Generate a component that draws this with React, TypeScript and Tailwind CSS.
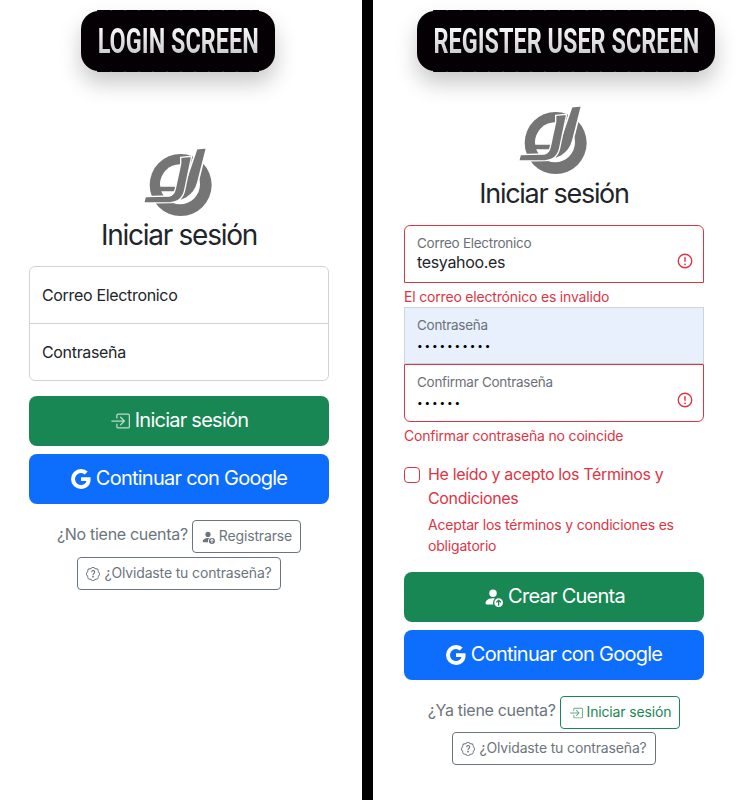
import React from "react";
import { BsBoxArrowInRight, BsPersonFillUp, BsPatchQuestion, BsGoogle } from "react-icons/bs";

const Logo = () => (
  <svg width="80" height="75" viewBox="0 0 240 225" className="block">
    <circle cx="122" cy="117" r="93" fill="#757575" />
    <circle cx="120" cy="115" r="60" fill="#fff" />
    <path d="M60 122 H112 L108 136 H58 Z" fill="#757575" />
    <path d="M170 8 L200 5 L174 108 Q166 140 140 156 L118 166 L132 120 Z" fill="#757575" stroke="#fff" strokeWidth="5" />
    <path d="M122 34 L155 31 L135 128 Q128 168 92 170 L11 171 L16 152 L88 150 Q102 148 106 128 L122 54 Z" fill="#757575" stroke="#fff" strokeWidth="4" />
  </svg>
);

const Badge = ({ text, w, ml }: { text: string; w: string; ml: string }) => (
  <div className={`relative flex h-[60px] items-center justify-center rounded-[18px] bg-[#040004] shadow-[0_12px_22px_rgba(0,0,0,0.22)] ${w} ${ml}`}>
    <div className="absolute -top-[1px] right-4 left-4 h-[2px] bg-[radial-gradient(ellipse_at_center,#040004_70%,transparent_100%)] bg-[length:14px_2px]" />
    <div className="absolute right-4 -bottom-[1px] left-4 h-[2px] bg-[radial-gradient(ellipse_at_center,#040004_70%,transparent_100%)] bg-[length:14px_2px]" />
    <span className="relative inline-block scale-x-[0.67] bg-gradient-to-b from-white to-[#c4c4c4] bg-clip-text font-['Roboto',sans-serif] text-[35px] leading-none font-bold whitespace-nowrap text-transparent">
      {text}
    </span>
  </div>
);

const ErrorIcon = () => (
  <svg width="18" height="18" viewBox="0 0 12 12" fill="none" stroke="#dc3545" className="mt-[19px] shrink-0">
    <circle cx="6" cy="6" r="4.500" strokeWidth="0.9" />
    <path strokeLinejoin="round" strokeWidth="0.6" d="M5.800 3.600h.4L6 6.500z" />
    <circle cx="6" cy="8.200" r=".6" fill="#dc3545" stroke="none" />
  </svg>
);

const BigButton = ({ color, icon, label }: { color: string; icon: React.ReactNode; label: string }) => (
  <div className={`flex h-[50px] w-[300px] items-center justify-center gap-[5px] rounded-lg text-[20px] tracking-[-0.75px] text-white ${color}`}>
    {icon}
    <span className="pb-[2px]">{label}</span>
  </div>
);

const SmallButton = ({ icon, label, tone }: { icon: React.ReactNode; label: string; tone: string }) => (
  <div className={`inline-flex h-[33px] items-center gap-1 rounded border px-2 text-sm tracking-[-0.15px] ${tone}`}>
    {icon}
    <span className="pb-[1px]">{label}</span>
  </div>
);

const Field = ({ label, value, tone, error, dots }: { label: string; value: string; tone: string; error?: boolean; dots?: boolean }) => (
  <div className={`flex items-start justify-between border pt-[7px] pr-[9px] pl-3 ${tone}`}>
    <div className="flex flex-col">
      <span className="text-[13.500px] leading-5 tracking-[-0.28px] text-[#6b7177]">{label}</span>
      <span className={dots ? "text-[10px] leading-5 tracking-[1.9px] text-black" : "text-[16px] leading-[19px] tracking-[-0.33px] text-[#212529]"}>{value}</span>
    </div>
    {error && <ErrorIcon />}
  </div>
);

const Footer = ({ text, btn, gap, pad }: { text: string; btn: React.ReactNode; gap: string; pad: string }) => (
  <div className={`flex w-[300px] flex-col items-center ${gap}`}>
    <div className="flex items-start gap-1">
      <span className={`text-[16px] leading-6 tracking-[-0.3px] text-[#6c757d] ${pad}`}>{text}</span>
      {btn}
    </div>
    <SmallButton tone="border-[#6c757d] text-[#6c757d]" icon={<BsPatchQuestion size={14} />} label="¿Olvidaste tu contraseña?" />
  </div>
);

export default function App() {
  return (
    <div className="flex h-[800px] w-[740px] overflow-hidden bg-white font-['Inter',sans-serif]">
      <div className="flex w-[362px] flex-col pt-[11px]">
        <Badge text="LOGIN SCREEN" w="w-[194px]" ml="ml-[81px]" />
        <div className="ml-[29px] flex w-[300px] flex-col">
          <div className="mt-[75px] flex justify-center pl-[2px]"><Logo /></div>
          <h3 className="mt-[-3px] text-center text-[28px] leading-[34px] tracking-[-1.28px] text-[#212529]">Iniciar sesión</h3>
          <div className="mt-[14px] overflow-hidden rounded-md border border-[#ced4da] tracking-[-0.33px]">
            <div className="flex h-[56px] items-center px-3 text-[16px] text-[#212529]">Correo Electronico</div>
            <div className="flex h-[57px] items-center border-t border-[#ced4da] px-3 text-[16px] text-[#212529]">Contraseña</div>
          </div>
          <div className="mt-[15px] flex flex-col gap-2">
            <BigButton color="bg-[#198754]" icon={<BsBoxArrowInRight size={20} className="opacity-70" />} label="Iniciar sesión" />
            <BigButton color="bg-[#0d6efd]" icon={<BsGoogle size={20} />} label="Continuar con Google" />
          </div>
          <div className="mt-4">
            <Footer gap="gap-1" pad="pt-[2px]" text="¿No tiene cuenta?" btn={<SmallButton tone="border-[#6c757d] text-[#6c757d]" icon={<BsPersonFillUp size={14} />} label="Registrarse" />} />
          </div>
        </div>
      </div>
      <div className="w-[11px] bg-black" />
      <div className="flex flex-1 flex-col pt-[11px]">
        <Badge text="REGISTER USER SCREEN" w="w-[298px]" ml="ml-[44px]" />
        <div className="ml-[31px] flex w-[300px] flex-col">
          <div className="mt-[33px] flex justify-center pl-[2px]"><Logo /></div>
          <h3 className="mt-[-2px] text-center text-[27px] leading-[34px] tracking-[-1.3px] text-[#212529]">Iniciar sesión</h3>
          <div className="mt-[14px]">
            <Field label="Correo Electronico" value="tesyahoo.es" tone="h-[58px] rounded-t-md border-[#dc3545] bg-white" error />
            <div className="mt-[3px] text-[14px] leading-[21px] tracking-[-0.18px] text-[#dc3545]">El correo electrónico es invalido</div>
            <Field label="Contraseña" value="••••••••••" dots tone="h-[57px] border-[#ced4da] bg-[#e8f0fe]" />
            <Field label="Confirmar Contraseña" value="••••••" dots tone="h-[58px] rounded-b-md border-[#dc3545] bg-white" error />
            <div className="mt-[3px] text-[14px] leading-[21px] tracking-[-0.18px] text-[#dc3545]">Confirmar contraseña no coincide</div>
          </div>
          <div className="mt-4 flex items-start gap-2">
            <div className="mt-[5px] h-4 w-4 shrink-0 rounded border border-[#dc3545] bg-white" />
            <div className="flex flex-col text-[#dc3545]">
              <span className="text-[16px] leading-6 tracking-[-0.35px]">He leído y acepto los Términos y Condiciones</span>
              <span className="mt-1 text-[14px] leading-[21px] tracking-[-0.18px]">Aceptar los términos y condiciones es obligatorio</span>
            </div>
          </div>
          <div className="mt-4 flex flex-col gap-2">
            <BigButton color="bg-[#198754]" icon={<BsPersonFillUp size={20} />} label="Crear Cuenta" />
            <BigButton color="bg-[#0d6efd]" icon={<BsGoogle size={20} />} label="Continuar con Google" />
          </div>
          <div className="mt-4">
            <Footer gap="gap-[3px]" pad="pt-[2px]" text="¿Ya tiene cuenta?" btn={<SmallButton tone="border-[#198754] text-[#198754]" icon={<BsBoxArrowInRight size={14} className="opacity-70" />} label="Iniciar sesión" />} />
          </div>
        </div>
      </div>
    </div>
  );
}
